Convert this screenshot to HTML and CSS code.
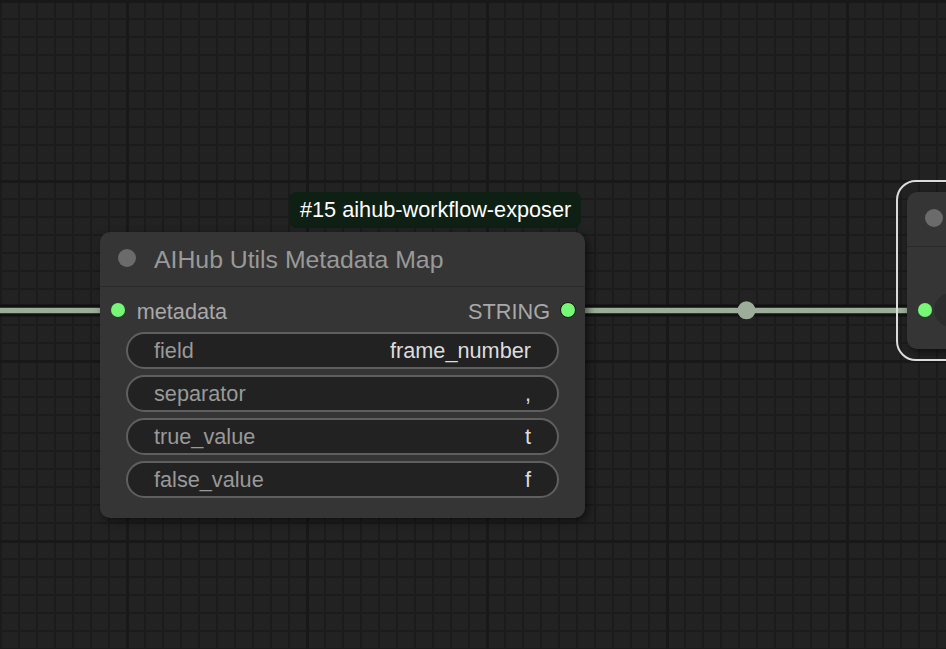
FILE: index.html
```html
<!DOCTYPE html>
<html lang="en">
<head>
<meta charset="utf-8">
<title>AIHub Utils Metadata Map</title>
<link rel="stylesheet" href="styles.css">
</head>
<body>
<div class="canvas">
  <svg class="links" width="946" height="649" viewBox="0 0 946 649">
    <line class="link-shadow" x1="0" y1="310.5" x2="112" y2="310.5"/>
    <line class="link" x1="0" y1="310.5" x2="112" y2="310.5"/>
    <line class="link-shadow" x1="575" y1="310.5" x2="918" y2="310.5"/>
    <line class="link" x1="575" y1="310.5" x2="918" y2="310.5"/>
    <circle class="link-center" cx="746.5" cy="310.3" r="9"/>
  </svg>

  <div class="badge">#15 aihub-workflow-exposer</div>

  <div class="node node-main">
    <div class="node-title">
      <span class="title-dot"></span>
      <span class="title-text">AIHub Utils Metadata Map</span>
    </div>
    <div class="node-body">
      <div class="slot-row">
        <div class="slot slot-in">
          <span class="slot-dot"></span>
          <span class="slot-label">metadata</span>
        </div>
        <div class="slot slot-out">
          <span class="slot-label">STRING</span>
          <span class="slot-dot slot-dot-out"></span>
        </div>
      </div>
      <div class="widgets">
        <div class="widget"><span class="w-label">field</span><span class="w-value">frame_number</span></div>
        <div class="widget"><span class="w-label">separator</span><span class="w-value">,</span></div>
        <div class="widget"><span class="w-label">true_value</span><span class="w-value">t</span></div>
        <div class="widget"><span class="w-label">false_value</span><span class="w-value">f</span></div>
      </div>
    </div>
  </div>

  <div class="node node-right">
    <div class="node-title">
      <span class="title-dot"></span>
    </div>
    <div class="node-body right-body">
      <div class="right-row">
        <span class="slot-dot"></span>
        <span class="right-pill"></span>
      </div>
    </div>
  </div>
</div>
</body>
</html>
```

FILE: styles.css
```css
* { box-sizing: border-box; }

html, body {
  margin: 0;
  padding: 0;
  width: 946px;
  height: 649px;
  overflow: hidden;
  background: #222222;
  font-family: "Liberation Sans", Arial, sans-serif;
}

.canvas {
  position: relative;
  width: 946px;
  height: 649px;
  overflow: hidden;
  background-color: #222222;
  background-image:
    linear-gradient(90deg, #181818 3px, transparent 3px),
    linear-gradient(180deg, #181818 3px, transparent 3px),
    linear-gradient(90deg, #1b1b1b 2px, transparent 2px),
    linear-gradient(180deg, #1b1b1b 2px, transparent 2px);
  background-size: 180px 180px, 180px 180px, 18px 18px, 18px 18px;
  background-position: 126px 0, 0 180px, 0 0, 0 0;
}

.links {
  position: absolute;
  left: 0;
  top: 0;
}

.link-shadow {
  stroke: #111111;
  stroke-width: 12;
}

.link {
  stroke: #9cae99;
  stroke-width: 5.5;
}

.link-center {
  fill: #9cae99;
}

.badge {
  position: absolute;
  left: 289px;
  top: 192px;
  width: 292px;
  height: 36px;
  padding-left: 11px;
  display: flex;
  align-items: center;
  background: #0e1f13;
  border-radius: 8px;
  color: #ffffff;
  font-size: 21.7px;
  white-space: nowrap;
}

.node {
  position: absolute;
  background: #353535;
  border-radius: 10px;
  box-shadow: 3px 3px 8px rgba(0, 0, 0, 0.55);
}

.node-main {
  left: 100px;
  top: 232px;
  width: 485px;
  height: 286px;
}

.node-title {
  height: 55px;
  display: flex;
  align-items: center;
  padding-left: 17.5px;
  border-bottom: 1px solid #2a2a2a;
}

.title-dot {
  width: 18px;
  height: 18px;
  border-radius: 50%;
  background: #6b6b6b;
  flex: none;
  margin-top: -2px;
}

.title-text {
  margin-left: 18.5px;
  padding-top: 2px;
  font-size: 24.8px;
  line-height: 1;
  color: #999999;
  white-space: nowrap;
}

.node-body {
  padding-top: 6px;
}

.slot-row {
  height: 34px;
  display: flex;
  align-items: center;
  justify-content: space-between;
  padding: 0 9px 0 11px;
}

.slot {
  display: flex;
  align-items: center;
}

.slot-dot {
  width: 14px;
  height: 14px;
  border-radius: 50%;
  background: #76f776;
  flex: none;
}

.slot-dot-out {
  width: 16px;
  height: 16px;
  border: 1.5px solid #111111;
  margin-left: 10px;
}

.slot-in .slot-label {
  margin-left: 11.7px;
}

.slot-label {
  padding-top: 4px;
  font-size: 21.7px;
  line-height: 1;
  color: #a8a8a8;
  white-space: nowrap;
}

.widgets {
  margin-top: 5px;
  padding: 0 26px;
  display: flex;
  flex-direction: column;
  gap: 6px;
}

.widget {
  height: 37px;
  border: 2px solid #5f5f5f;
  border-radius: 19px;
  background: #222222;
  display: flex;
  align-items: center;
  justify-content: space-between;
  padding: 0 26px;
  font-size: 21.7px;
  line-height: 1;
}

.w-label {
  color: #999999;
}

.w-value {
  color: #dddddd;
}

.node-right {
  left: 907px;
  top: 192px;
  width: 120px;
  height: 157px;
}

.node-right::before {
  content: "";
  position: absolute;
  left: -11px;
  top: -12px;
  right: -11px;
  bottom: -12px;
  border: 2px solid #dcdcdc;
  border-radius: 20px;
  pointer-events: none;
}

.node-right .node-title {
  height: 55px;
}

.right-body {
  padding-top: 46px;
}

.right-row {
  height: 34px;
  display: flex;
  align-items: center;
  padding-left: 11px;
}

.right-pill {
  margin-left: 2px;
  width: 60px;
  height: 34px;
  border-radius: 17px;
  background: #2c2c2c;
}
```
